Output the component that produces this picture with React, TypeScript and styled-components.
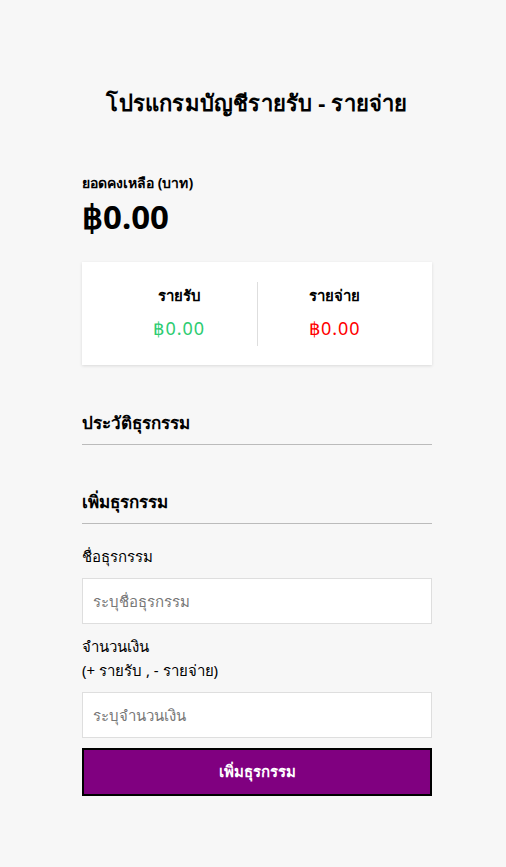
import React from 'react'
import styled, { createGlobalStyle } from 'styled-components'

const GlobalStyle = createGlobalStyle`
  * { box-sizing: border-box; }
  body {
    margin: 0;
    padding: 0 0 0 8px;
    background: #f7f7f7;
    font-family: 'Noto Sans', 'Liberation Sans', sans-serif;
    color: #000;
  }
`

const Container = styled.div`
  width: 350px;
  margin: 0 auto;
  padding: 86px 0 70px;
`

const Title = styled.h2`
  margin: 0 0 51px;
  text-align: center;
  font-size: 22px;
  font-weight: 700;
  letter-spacing: 0.2px;
`

const BalanceLabel = styled.h4`
  margin: 0;
  font-size: 14px;
  font-weight: 700;
`

const Balance = styled.h1`
  margin: 3px 0 25px;
  font-size: 33px;
  font-weight: 700;
  line-height: 1.2;
`

const SummaryCard = styled.div`
  display: flex;
  background: #fff;
  padding: 20px 20px 19px;
  box-shadow: 0 1px 3px rgba(0, 0, 0, 0.12);
  margin-bottom: 44px;
`

const SummaryCol = styled.div<{ $divider?: boolean }>`
  flex: 1;
  text-align: center;
  border-right: ${(p) => (p.$divider ? '1px solid #dedede' : 'none')};
  padding: 2px 0 6px;
`

const SummaryLabel = styled.h4`
  margin: 0 0 8px;
  font-size: 15px;
  font-weight: 700;
`

const Money = styled.p<{ $tone: 'plus' | 'minus' }>`
  margin: 0;
  font-size: 18px;
  letter-spacing: 1px;
  color: ${(p) => (p.$tone === 'plus' ? '#2ecc71' : '#ff0000')};
`

const SectionTitle = styled.h3`
  margin: 0;
  padding-bottom: 8px;
  border-bottom: 1px solid #bbb;
  font-size: 17px;
  font-weight: 700;
`

const HistoryList = styled.ul`
  list-style: none;
  margin: 0 0 43px;
  padding: 0;
`

const Form = styled.form`
  display: flex;
  flex-direction: column;
  margin-top: 20px;
`

const Field = styled.div`
  display: flex;
  flex-direction: column;
`

const Label = styled.label`
  font-size: 15px;
  line-height: 24px;
  margin: 0 0 10px;
`

const Input = styled.input`
  display: block;
  width: 100%;
  height: 46px;
  border: 1px solid #dedede;
  background: #fff;
  padding: 10px;
  font-family: inherit;
  font-size: 15px;
  margin-bottom: 10px;
  outline: none;
  &::placeholder { color: #777; }
`

const SubmitButton = styled.button`
  width: 100%;
  height: 48px;
  background: #800080;
  color: #fff;
  border: 2px solid #000;
  font-family: inherit;
  font-size: 15px;
  font-weight: 600;
  cursor: pointer;
`

export default function App() {
  return (
    <>
      <GlobalStyle />
      <Container>
        <Title>โปรแกรมบัญชีรายรับ - รายจ่าย</Title>
        <BalanceLabel>ยอดคงเหลือ (บาท)</BalanceLabel>
        <Balance>฿0.00</Balance>
        <SummaryCard>
          <SummaryCol $divider>
            <SummaryLabel>รายรับ</SummaryLabel>
            <Money $tone="plus">฿0.00</Money>
          </SummaryCol>
          <SummaryCol>
            <SummaryLabel>รายจ่าย</SummaryLabel>
            <Money $tone="minus">฿0.00</Money>
          </SummaryCol>
        </SummaryCard>
        <SectionTitle>ประวัติธุรกรรม</SectionTitle>
        <HistoryList />
        <SectionTitle>เพิ่มธุรกรรม</SectionTitle>
        <Form onSubmit={(e) => e.preventDefault()}>
          <Field>
            <Label htmlFor="text">ชื่อธุรกรรม</Label>
            <Input id="text" type="text" placeholder="ระบุชื่อธุรกรรม" />
          </Field>
          <Field>
            <Label htmlFor="amount">
              จำนวนเงิน
              <br />
              (+ รายรับ , - รายจ่าย)
            </Label>
            <Input id="amount" type="number" placeholder="ระบุจำนวนเงิน" />
          </Field>
          <SubmitButton type="submit">เพิ่มธุรกรรม</SubmitButton>
        </Form>
      </Container>
    </>
  )
}
